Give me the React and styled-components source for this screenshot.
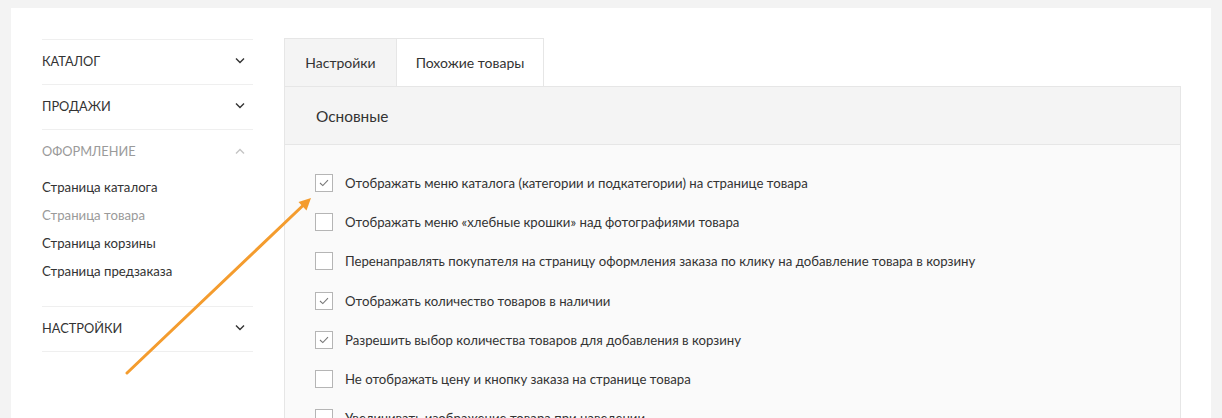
import React from 'react'
import styled, {createGlobalStyle} from 'styled-components'

const GlobalStyle = createGlobalStyle`
  body {
    margin: 0;
    background: #f3f3f3;
    font-family: Lato, "Open Sans", sans-serif;
    color: #333;
    overflow: hidden;
  }
`

const Page = styled.div`
  position: relative;
  height: 418px;
  padding: 8px 11px 0;
  box-sizing: border-box;
`

const Card = styled.div`
  background: #fff;
  display: flex;
  padding: 31px 30px 0 31px;
  min-height: 410px;
  box-sizing: border-box;
`

const Sidebar = styled.nav`
  width: 211px;
  flex-shrink: 0;
  margin-right: 31px;
`

const Section = styled.div`
  border-top: 1px solid #efefef;
  &:last-child {
    border-bottom: 1px solid #efefef;
  }
`

const SectionHead = styled.div`
  height: 44px;
  box-sizing: border-box;
  padding: 0 8px 3px 0;
  display: flex;
  align-items: center;
  justify-content: space-between;
  font-size: 12.8px;
  text-transform: uppercase;
  color: ${p => (p.$open ? '#9a9a9a' : '#333')};
`

const SubList = styled.div`
  margin-top: -1px;
  padding-bottom: 21px;
`

const SubItem = styled.div`
  height: 28px;
  line-height: 28px;
  font-size: 13.2px;
  color: ${p => (p.$active ? '#9a9a9a' : '#333')};
`

const Main = styled.div`
  flex: 1;
  margin-top: -1px;
`

const Tabs = styled.div`
  display: flex;
`

const Tab = styled.div`
  height: 48px;
  display: flex;
  align-items: center;
  justify-content: center;
  width: ${p => p.$w}px;
  box-sizing: border-box;
  border: 1px solid #e6e6e6;
  border-bottom: none;
  border-left-width: ${p => (p.$first ? 1 : 0)}px;
  background: ${p => (p.$active ? '#f4f4f4' : '#fff')};
  font-size: 14px;
  color: #333;
`

const Panel = styled.div`
  border: 1px solid #e6e6e6;
  border-bottom: none;
  background: #fafafa;
  min-height: 340px;
`

const PanelHead = styled.div`
  height: 57px;
  display: flex;
  align-items: center;
  padding-left: 31px;
  background: #f4f4f4;
  border-bottom: 1px solid #e6e6e6;
  font-size: 15.4px;
  color: #333;
`

const PanelBody = styled.div`
  padding: 18px 30px 0;
`

const Row = styled.label`
  height: 39.3px;
  display: flex;
  align-items: center;
  gap: 12px;
  font-size: 13.2px;
  color: #333;
`

const Box = styled.span`
  width: 18px;
  height: 18px;
  box-sizing: border-box;
  border: 1px solid #b5b5b5;
  background: #fff;
  display: flex;
  align-items: center;
  justify-content: center;
  flex-shrink: 0;
`

const Overlay = styled.svg`
  position: absolute;
  left: 0;
  top: 0;
  pointer-events: none;
`

const Chevron = ({up, color}) => (
  <svg width="10" height="6" viewBox="0 0 10 6">
    <polyline
      points={up ? '1,5.5 5,1.5 9,5.5' : '1,0.5 5,4.5 9,0.5'}
      fill="none"
      stroke={color}
      strokeWidth="1.4"
    />
  </svg>
)

const Check = () => (
  <svg width="10" height="8" viewBox="0 0 10 8">
    <polyline points="1,4 3.8,6.6 9,1.2" fill="none" stroke="#777" strokeWidth="1.1" />
  </svg>
)

const options = [
  ['Отображать меню каталога (категории и подкатегории) на странице товара', true],
  ['Отображать меню «хлебные крошки» над фотографиями товара', false],
  ['Перенаправлять покупателя на страницу оформления заказа по клику на добавление товара в корзину', false],
  ['Отображать количество товаров в наличии', true],
  ['Разрешить выбор количества товаров для добавления в корзину', true],
  ['Не отображать цену и кнопку заказа на странице товара', false],
  ['Увеличивать изображение товара при наведении', false],
]

export default function App() {
  return (
    <Page>
      <GlobalStyle />
      <Card>
        <Sidebar>
          <Section>
            <SectionHead>Каталог<Chevron color="#333" /></SectionHead>
          </Section>
          <Section>
            <SectionHead>Продажи<Chevron color="#333" /></SectionHead>
          </Section>
          <Section>
            <SectionHead $open>Оформление<Chevron up color="#c4c4c4" /></SectionHead>
            <SubList>
              <SubItem>Страница каталога</SubItem>
              <SubItem $active>Страница товара</SubItem>
              <SubItem>Страница корзины</SubItem>
              <SubItem>Страница предзаказа</SubItem>
            </SubList>
          </Section>
          <Section>
            <SectionHead>Настройки<Chevron color="#333" /></SectionHead>
          </Section>
        </Sidebar>
        <Main>
          <Tabs>
            <Tab $first $active $w={113}>Настройки</Tab>
            <Tab $w={147}>Похожие товары</Tab>
          </Tabs>
          <Panel>
            <PanelHead>Основные</PanelHead>
            <PanelBody>
              {options.map(([text, on]) => (
                <Row key={text}>
                  <Box>{on && <Check />}</Box>
                  {text}
                </Row>
              ))}
            </PanelBody>
          </Panel>
        </Main>
      </Card>
      <Overlay width="1222" height="418">
        <line x1="127" y1="373" x2="303" y2="205.5" stroke="#f49c2e" strokeWidth="3" strokeLinecap="round" />
        <polygon points="311,198 306.5,210.5 298.5,202" fill="#f49c2e" />
      </Overlay>
    </Page>
  )
}
